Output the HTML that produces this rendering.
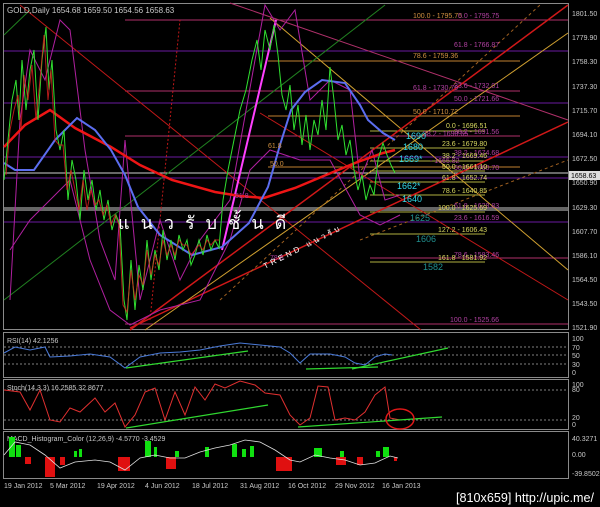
<!DOCTYPE html>
<html><head><meta charset="utf-8"><style>
html,body{margin:0;padding:0;background:#000;width:600px;height:507px;overflow:hidden}
svg{display:block}
text{font-family:"Liberation Sans",sans-serif}
</style></head><body>
<svg width="600" height="507" viewBox="0 0 600 507" xmlns="http://www.w3.org/2000/svg">
<rect width="600" height="507" fill="#000"/>
<g fill="none" stroke="#8a8a8a" stroke-width="1">
<rect x="3.5" y="3.5" width="565" height="326"/>
<rect x="3.5" y="332.5" width="565" height="45"/>
<rect x="3.5" y="379.5" width="565" height="50"/>
<rect x="3.5" y="431.5" width="565" height="47"/>
</g>
<g stroke-width="1">
<line x1="125" y1="20" x2="568" y2="20" stroke="#b0306a"/>
<line x1="4" y1="51" x2="568" y2="51" stroke="#6a1aa0"/>
<line x1="268" y1="61" x2="520" y2="61" stroke="#c08030"/>
<line x1="125" y1="91" x2="520" y2="91" stroke="#b0306a"/>
<line x1="4" y1="103" x2="568" y2="103" stroke="#6a1aa0"/>
<line x1="268" y1="116" x2="520" y2="116" stroke="#c08030"/>
<line x1="370" y1="131" x2="485" y2="131" stroke="#b0b040"/>
<line x1="125" y1="136" x2="520" y2="136" stroke="#b0306a"/>
<line x1="370" y1="148" x2="485" y2="148" stroke="#b0b040"/>
<line x1="4" y1="157" x2="568" y2="157" stroke="#6a1aa0"/>
<line x1="370" y1="161" x2="485" y2="161" stroke="#b0b040"/>
<line x1="268" y1="167" x2="520" y2="167" stroke="#c08030"/>
<line x1="370" y1="171" x2="485" y2="171" stroke="#b0b040"/>
<line x1="4" y1="173" x2="568" y2="173" stroke="#cfcfcf"/>
<line x1="4" y1="178" x2="568" y2="178" stroke="#6a1aa0"/>
<line x1="370" y1="182" x2="485" y2="182" stroke="#b0b040"/>
<line x1="370" y1="195" x2="485" y2="195" stroke="#b0b040"/>
<line x1="4" y1="209" x2="568" y2="209" stroke="#ababab" stroke-width="4" opacity="0.6"/>
<line x1="370" y1="212" x2="485" y2="212" stroke="#b0b040"/>
<line x1="4" y1="222" x2="568" y2="222" stroke="#6a1aa0"/>
<line x1="370" y1="234" x2="485" y2="234" stroke="#b0b040"/>
<line x1="370" y1="258" x2="568" y2="258" stroke="#b0306a"/>
<line x1="370" y1="262" x2="485" y2="262" stroke="#b0b040"/>
<line x1="125" y1="324" x2="568" y2="324" stroke="#b0306a"/>
</g>
<g fill="none" stroke-width="1">
<line x1="20" y1="5" x2="421" y2="330" stroke="#c01818"/>
<line x1="270" y1="18" x2="568" y2="270" stroke="#d0a030"/>
<line x1="230" y1="3" x2="568" y2="120" stroke="#b0306a"/>
<line x1="130" y1="330" x2="568" y2="5" stroke="#d01818" stroke-width="1.5"/>
<line x1="130" y1="328" x2="568" y2="122" stroke="#d01818" stroke-width="1.5"/>
<line x1="145" y1="330" x2="568" y2="33" stroke="#d0a030"/>
<line x1="4" y1="300" x2="385" y2="5" stroke="#208020"/>
<line x1="4" y1="35" x2="30" y2="10" stroke="#208020"/>
<line x1="150" y1="320" x2="180" y2="20" stroke="#c01818" stroke-dasharray="2,2"/>
<line x1="220" y1="300" x2="540" y2="5" stroke="#a06020" stroke-dasharray="3,3"/>
<line x1="360" y1="240" x2="568" y2="160" stroke="#a06020" stroke-dasharray="3,3"/>
<line x1="260" y1="113" x2="568" y2="300" stroke="#c01818"/>
<line x1="222" y1="250" x2="276" y2="20" stroke="#ff40ff" stroke-width="2"/>
</g>
<polyline fill="none" stroke="#b020a0" stroke-width="1" points="10,300 20,120 30,50 45,80 60,20 70,30 85,150 100,240 115,280 125,140 140,300 160,220 180,280 200,240 230,200 255,60 265,5 280,30 295,10 310,100 330,80 350,90 360,180 372,150 385,200 400,195"/>
<polyline fill="none" stroke="#b020a0" stroke-width="1" points="10,250 30,220 50,200 70,180 90,260 110,310 130,325 160,310 200,300 230,240 250,170 270,150 300,160 330,160 360,215 380,225 400,215"/>
<polyline fill="none" stroke="#ee1515" stroke-width="2.5" points="4,147 25,125 50,110 75,128 111,147 140,165 172,180 215,192 240,196 264,198 295,188 326,175 355,163 383,153 395,150"/>
<polyline fill="none" stroke="#5c6ef0" stroke-width="2" points="4,163 15,170 34,170 55,140 77,118 95,130 111,150 125,175 138,207 160,235 192,255 222,247 249,223 268,187 280,145 291,110 305,92 322,80 345,83 360,105 368,120 383,133 395,140"/>
<polyline fill="none" stroke="#30e030" stroke-width="1" points="4,180 8,140 12,100 16,80 19,120 22,60 26,110 30,70 34,50 38,120 42,60 46,27 49,90 52,60 56,130 60,150 64,130 68,200 72,160 76,180 80,220 84,170 88,200 92,180 96,210 100,190 104,220 108,200 112,230 116,215 120,225 124,300 127,320 131,260 135,310 139,265 143,290 147,240 151,280 155,250 159,270 163,230 167,260 171,240 175,260 179,235 183,250 187,240 191,265 195,255 199,240 203,255 207,235 211,250 215,240 219,248 223,200 228,170 234,140 240,110 246,90 252,60 257,40 261,70 265,30 270,50 274,25 278,55 282,95 286,110 290,85 294,130 298,105 302,145 306,115 310,150 314,120 318,135 322,100 326,130 330,67 334,100 338,140 342,125 346,155 350,140 354,170 358,190 362,175 366,200 370,185 374,195 378,160 383,143 387,155 391,165 395,173"/>
<polyline fill="none" stroke="#e02020" stroke-width="1" opacity="0.8" points="6,175 10,130 14,110 18,95 21,130 24,75 28,100 32,65 36,120 40,80 44,35 48,100 51,70 55,140 59,145 63,145 67,190 71,170 75,190 79,210 83,180 87,210 91,190 95,205 99,200 103,215 107,205 111,225 115,215 119,225 123,305 127,312 131,270 135,300 139,275 143,285 147,250 151,275 155,255 159,265 163,240 167,255 171,245 175,255 179,240 183,245 187,245 191,255 195,250 199,245 203,250 207,240 211,245 215,240 219,240"/>
<text x="7" y="13" font-size="8" fill="#c8c8c8">GOLD,Daily  1654.68 1659.50 1654.56 1658.63</text>
<g font-size="7" fill="#d09040">
<text x="413" y="18">100.0 - 1795.75</text><text x="413" y="58">78.6 - 1759.36</text><text x="413" y="114">50.0 - 1710.72</text>
<text x="270" y="166">50.0</text><text x="268" y="148">61.8</text>
</g>
<g font-size="7" fill="#b040a0">
<text x="458" y="18">0.0 - 1795.75</text><text x="454" y="47">61.8 - 1766.87</text><text x="454" y="88">23.6 - 1732.01</text><text x="454" y="101">50.0 - 1721.66</text>
<text x="454" y="134">38.2 - 1691.56</text><text x="454" y="155">38.2 - 1674.68</text><text x="454" y="170">50.0 - 1660.70</text><text x="454" y="208">61.8 - 1628.83</text><text x="454" y="220">23.6 - 1616.59</text><text x="454" y="257">78.6 - 1583.46</text><text x="450" y="322">100.0 - 1525.66</text>
<text x="413" y="90">61.8 - 1730.79</text><text x="423" y="136">38.2 - 1690.65</text><text x="430" y="163">- 1665.82</text>
<text x="270" y="260">78.6</text><text x="235" y="198">61.8</text>
</g>
<g font-size="7" fill="#d8d860">
<text x="446" y="128">0.0 - 1696.51</text><text x="442" y="146">23.6 - 1679.80</text><text x="442" y="158">38.2 - 1669.46</text><text x="442" y="169">50.0 - 1661.10</text><text x="442" y="180">61.8 - 1652.74</text><text x="442" y="193">78.6 - 1640.85</text><text x="438" y="210">100.0 - 1625.69</text><text x="438" y="232">127.2 - 1606.43</text><text x="438" y="260">161.8 - 1581.92</text>
</g>
<g font-size="9" fill="#30d8e8">
<text x="406" y="139">1690</text><text x="403" y="150">1680</text><text x="399" y="162">1669*</text><text x="397" y="189">1662*</text><text x="402" y="202">1640</text>
</g>
<g font-size="9" fill="#20908f"><text x="410" y="221">1625</text><text x="416" y="242">1606</text><text x="423" y="270">1582</text></g>
<text x="118" y="229" font-size="18" fill="#fff" letter-spacing="11" font-family="'Liberation Sans','Noto Sans CJK SC',sans-serif">แนวรับชั้นดี</text>
<text x="265" y="269" font-size="8" fill="#fff" letter-spacing="3" transform="rotate(-27 265 269)">TREND แนวรับ</text>
<g font-size="7" fill="#c8c8c8">
<text x="572" y="16">1801.50</text><text x="572" y="40">1779.90</text><text x="572" y="64">1758.30</text><text x="572" y="89">1737.30</text><text x="572" y="113">1715.70</text><text x="572" y="137">1694.10</text><text x="572" y="161">1672.50</text><text x="572" y="185">1650.90</text><text x="572" y="210">1629.30</text><text x="572" y="234">1607.70</text><text x="572" y="258">1586.10</text><text x="572" y="282">1564.50</text><text x="572" y="306">1543.50</text><text x="572" y="330">1521.90</text>
<text x="572" y="341">100</text><text x="572" y="350">70</text><text x="572" y="358">50</text><text x="572" y="367">30</text><text x="572" y="375">0</text>
<text x="572" y="387">100</text><text x="572" y="392">80</text><text x="572" y="420">20</text><text x="572" y="427">0</text>
<text x="572" y="441">40.3271</text><text x="572" y="457">0.00</text><text x="572" y="476">-39.8502</text>
</g>
<rect x="569" y="171" width="31" height="9" fill="#ddd"/><text x="571" y="178" font-size="7" fill="#000">1658.63</text>
<g stroke="#aaa" stroke-dasharray="2,2" stroke-width="0.8"><line x1="4" y1="347" x2="568" y2="347"/><line x1="4" y1="355" x2="568" y2="355"/><line x1="4" y1="364" x2="568" y2="364"/></g>
<text x="7" y="343" font-size="7" fill="#c8c8c8">RSI(14) 42.1256</text>
<polyline fill="none" stroke="#4a7ad8" stroke-width="1" points="4,353 15,347 30,350 45,347 50,357 70,356 90,354 110,357 125,368 140,357 160,353 180,352 200,350 220,346 240,343 260,345 280,347 290,353 300,363 310,354 330,354 345,357 355,363 365,365 375,357 385,354 392,355"/>
<g stroke="#30d830" stroke-width="1.2"><line x1="126" y1="368" x2="248" y2="351"/><line x1="306" y1="369" x2="378" y2="367"/><line x1="352" y1="369" x2="448" y2="348"/></g>
<g stroke="#aaa" stroke-dasharray="2,2" stroke-width="0.8"><line x1="4" y1="390" x2="568" y2="390"/><line x1="4" y1="420" x2="568" y2="420"/></g>
<text x="7" y="390" font-size="7" fill="#c8c8c8">Stoch(14,3,3) 16.2585 32.8677</text>
<polyline fill="none" stroke="#e03030" stroke-width="1" points="4,390 20,392 30,410 40,390 50,420 60,422 70,408 80,412 95,398 105,412 115,403 125,427 135,415 145,392 155,388 165,420 175,392 185,415 195,387 205,400 215,384 225,388 240,381 255,385 265,393 280,395 290,415 300,425 310,418 318,386 328,387 335,420 345,418 355,420 365,412 375,395 385,387 390,418 400,420"/>
<g stroke="#30d830" stroke-width="1.2"><line x1="126" y1="428" x2="268" y2="405"/><line x1="298" y1="427" x2="442" y2="417"/></g>
<ellipse cx="400" cy="419" rx="14" ry="10" fill="none" stroke="#e01818" stroke-width="1.5"/>
<text x="7" y="441" font-size="7" fill="#c8c8c8">MACD_Histogram_Color (12,26,9) -4.5770 -3.4529</text>
<g fill="#10e010">
<rect x="9" y="437" width="6" height="20"/><rect x="16" y="445" width="5" height="12"/><rect x="74" y="451" width="3" height="6"/><rect x="79" y="449" width="3" height="8"/><rect x="145" y="441" width="6" height="16"/><rect x="154" y="447" width="3" height="10"/><rect x="175" y="451" width="4" height="6"/><rect x="205" y="447" width="4" height="10"/><rect x="232" y="444" width="5" height="13"/><rect x="242" y="449" width="4" height="8"/><rect x="250" y="446" width="4" height="11"/><rect x="314" y="448" width="8" height="9"/><rect x="340" y="451" width="4" height="6"/><rect x="376" y="451" width="4" height="6"/><rect x="383" y="447" width="6" height="10"/>
</g>
<g fill="#e01010">
<rect x="25" y="457" width="6" height="7"/><rect x="45" y="457" width="10" height="20"/><rect x="60" y="457" width="5" height="8"/><rect x="118" y="457" width="12" height="14"/><rect x="166" y="457" width="10" height="12"/><rect x="276" y="457" width="16" height="14"/><rect x="336" y="457" width="10" height="8"/><rect x="357" y="457" width="6" height="8"/><rect x="394" y="457" width="3" height="4"/>
</g>
<polyline fill="none" stroke="#e0e0e0" stroke-width="0.8" points="4,455 15,442 30,445 45,455 60,468 75,462 95,460 110,462 125,470 140,458 155,455 170,458 185,458 200,452 215,448 230,445 245,440 260,442 275,450 290,460 300,462 315,455 330,458 345,460 360,465 375,463 390,456 398,458"/>
<g font-size="7" fill="#c8c8c8">
<text x="4" y="488">19 Jan 2012</text><text x="50" y="488">5 Mar 2012</text><text x="97" y="488">19 Apr 2012</text><text x="145" y="488">4 Jun 2012</text><text x="192" y="488">18 Jul 2012</text><text x="240" y="488">31 Aug 2012</text><text x="288" y="488">16 Oct 2012</text><text x="335" y="488">29 Nov 2012</text><text x="382" y="488">16 Jan 2013</text>
</g>
<text x="456" y="502" font-size="13" fill="#fff" textLength="138" lengthAdjust="spacingAndGlyphs" font-family="'Liberation Sans Narrow','Liberation Sans',sans-serif">[810x659] http://upic.me/</text>
</svg>
</body></html>
